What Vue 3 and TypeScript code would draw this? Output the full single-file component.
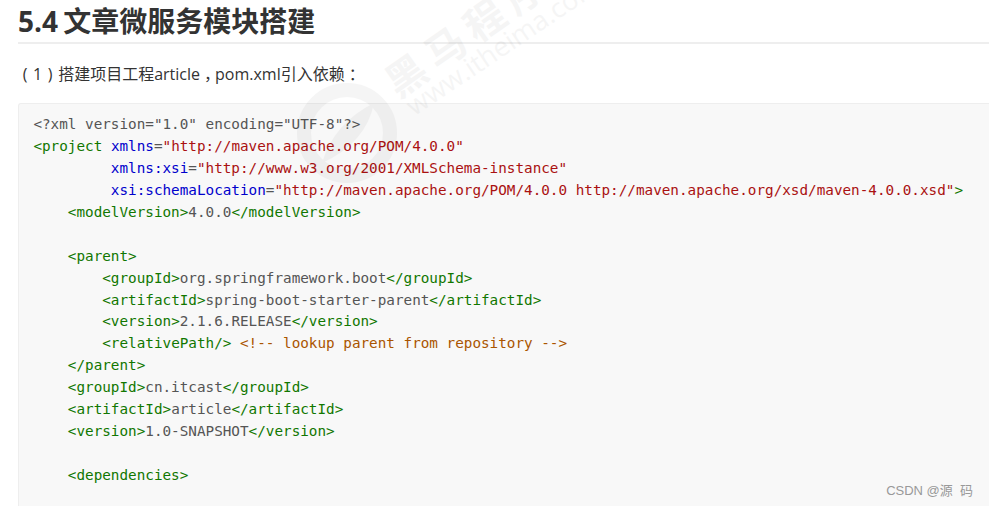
<script setup lang="ts">
type Seg = [string, string];
const t = 'tag', a = 'attr', s = 'str', p = 'plain', c = 'comment';
const lines: Seg[][] = [
  [[p, '<?xml version="1.0" encoding="UTF-8"?>']],
  [[t, '<project'], [p, ' '], [a, 'xmlns'], [p, '='], [s, '"http://maven.apache.org/POM/4.0.0"']],
  [[p, '         '], [a, 'xmlns:xsi'], [p, '='], [s, '"http://www.w3.org/2001/XMLSchema-instance"']],
  [[p, '         '], [a, 'xsi:schemaLocation'], [p, '='], [s, '"http://maven.apache.org/POM/4.0.0 http://maven.apache.org/xsd/maven-4.0.0.xsd"'], [t, '>']],
  [[p, '    '], [t, '<modelVersion>'], [p, '4.0.0'], [t, '</modelVersion>']],
  [],
  [[p, '    '], [t, '<parent>']],
  [[p, '        '], [t, '<groupId>'], [p, 'org.springframework.boot'], [t, '</groupId>']],
  [[p, '        '], [t, '<artifactId>'], [p, 'spring-boot-starter-parent'], [t, '</artifactId>']],
  [[p, '        '], [t, '<version>'], [p, '2.1.6.RELEASE'], [t, '</version>']],
  [[p, '        '], [t, '<relativePath/>'], [p, ' '], [c, '<!-- lookup parent from repository -->']],
  [[p, '    '], [t, '</parent>']],
  [[p, '    '], [t, '<groupId>'], [p, 'cn.itcast'], [t, '</groupId>']],
  [[p, '    '], [t, '<artifactId>'], [p, 'article'], [t, '</artifactId>']],
  [[p, '    '], [t, '<version>'], [p, '1.0-SNAPSHOT'], [t, '</version>']],
  [],
  [[p, '    '], [t, '<dependencies>']],
  [],
];
</script>

<template>
  <div class="page">
    <h2 class="title">5.4 文章微服务模块搭建</h2>
    <p class="intro"><span class="paren">(</span>1<span class="paren">)</span>搭建项目工程article<span class="punct">，</span>pom.xml引入依赖<span class="punct">：</span></p>
    <div class="code">
      <div v-for="(line, i) in lines" :key="i" class="line">
        <span v-for="(seg, j) in line" :key="j" :class="seg[0]">{{ seg[1] }}</span>
      </div>
    </div>
    <div class="mark">
      <svg class="mark-logo" width="110" height="110" viewBox="0 0 110 110">
        <circle cx="55" cy="55" r="43" fill="none" stroke="#000" stroke-width="14" />
        <path d="M30 85 Q42 45 82 25 Q74 65 30 85Z" fill="#000" />
      </svg>
      <span class="mark-cn">黑马程序员</span>
      <span class="mark-en">www.itheima.com</span>
    </div>
    <div class="credit">CSDN @源&nbsp; 码</div>
  </div>
</template>

<style>
html, body { margin: 0; background: #fff; overflow: hidden; }
</style>

<style scoped>
.page {
  position: relative;
  width: 989px;
  height: 506px;
  overflow: hidden;
  padding-left: 18px;
  box-sizing: border-box;
  background: #fff;
  font-family: "Open Sans", "Noto Sans CJK SC", sans-serif;
  color: #333;
}
.title {
  margin: 0;
  height: 44px;
  line-height: 42px;
  box-sizing: border-box;
  border-bottom: 2px solid #eee;
  font-size: 28px;
  font-weight: 700;
  word-spacing: -2px;
  white-space: nowrap;
}
.intro {
  margin: 0 0 0 -1px;
  height: 59px;
  padding-top: 19px;
  box-sizing: border-box;
  line-height: 22px;
  font-size: 16px;
  white-space: nowrap;
}
.paren { display: inline-block; width: 16px; text-align: center; }
.punct {
  display: inline-block;
  width: 15px;
  padding-left: 4px;
  box-sizing: border-box;
  font-feature-settings: "halt";
}
.code {
  height: 420px;
  padding: 10px 0 0 14.4px;
  box-sizing: border-box;
  background: #f8f8f8;
  border: 1px solid #eee;
  border-right: 0;
  border-radius: 3px 0 0 3px;
  font-family: "DejaVu Sans Mono", monospace;
  font-size: 14.3px;
  line-height: 21.95px;
  color: #555;
}
.line { height: 21.95px; white-space: pre; }
.tag { color: #117700; }
.attr { color: #0000cc; }
.str { color: #aa1111; }
.comment { color: #aa5500; }
.plain { color: #555; }
.mark {
  position: absolute;
  inset: 0;
  pointer-events: none;
  opacity: 0.035;
  color: #000;
}
.mark-logo { position: absolute; left: 292px; top: 78px; }
.mark-cn {
  position: absolute;
  left: 401px;
  top: 63px;
  font-size: 40px;
  letter-spacing: 8px;
  font-weight: 700;
  line-height: 1;
  white-space: nowrap;
  transform: rotate(-35deg);
  transform-origin: 0 100%;
}
.mark-en {
  position: absolute;
  left: 416px;
  top: 92px;
  font-size: 27px;
  line-height: 1;
  white-space: nowrap;
  transform: rotate(-34deg);
  transform-origin: 0 100%;
}
.credit {
  position: absolute;
  right: 16px;
  top: 482px;
  font-family: "Liberation Sans", "Noto Sans CJK SC", sans-serif;
  font-size: 13px;
  line-height: 18px;
  color: #999;
  white-space: nowrap;
}
</style>
